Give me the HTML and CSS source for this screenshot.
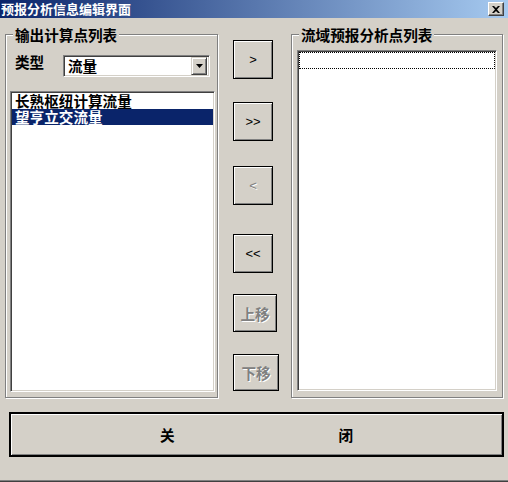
FILE: index.html
```html
<!DOCTYPE html>
<html lang="zh-CN">
<head>
  <meta charset="UTF-8" />
  <title>预报分析信息编辑界面</title>
  <link rel="stylesheet" href="styles.css">
</head>
<body>
  <div class="window">
    <div class="titlebar">
      <span class="title">预报分析信息编辑界面</span>
      <button class="close">
        <svg width="8" height="7" viewBox="0 0 8 7"><path d="M0 0h2l2 2 2-2h2L5 3.5 8 7H6L4 5 2 7H0l3-3.5z" fill="#000"/></svg>
      </button>
    </div>
    <div class="panes">
      <div class="group group-left">
        <span class="caption">输出计算点列表</span>
        <div class="type-row">
          <span class="type-label">类型</span>
          <div class="combo">
            <span class="combo-value">流量</span>
            <span class="combo-arrow">
              <svg width="7" height="4" viewBox="0 0 7 4"><path d="M0 0h7L3.5 4z" fill="#000"/></svg>
            </span>
          </div>
        </div>
        <ul class="listbox list-left">
          <li>长熟枢纽计算流量</li>
          <li class="selected">望亨立交流量</li>
        </ul>
      </div>
      <div class="actions">
        <button class="btn btn-add">&gt;</button>
        <button class="btn btn-add-all">&gt;&gt;</button>
        <button class="btn btn-remove" disabled>&lt;</button>
        <button class="btn btn-remove-all">&lt;&lt;</button>
        <button class="btn btn-up cn" disabled>上移</button>
        <button class="btn btn-down cn" disabled>下移</button>
      </div>
      <div class="group group-right">
        <span class="caption">流域预报分析点列表</span>
        <ul class="listbox list-right">
          <li class="focus"></li>
        </ul>
      </div>
    </div>
    <button class="close-btn"><span>关</span><span>闭</span></button>
  </div>
</body>
</html>
```

FILE: styles.css
```css
* { margin: 0; padding: 0; box-sizing: border-box; }
body {
  width: 508px;
  height: 482px;
  overflow: hidden;
  background: #d4d0c8;
  font-family: "Noto Sans CJK SC", sans-serif;
  color: #000;
}
.window {
  height: 482px;
  border-bottom: 1px solid #404040;
  box-shadow: inset 0 -1px #808080;
}
.titlebar {
  height: 18px;
  display: flex;
  align-items: center;
  justify-content: space-between;
  padding: 0 4px 0 1px;
  background: linear-gradient(to right, #0a246a, #a6caf0);
}
.title {
  color: #fff;
  font-weight: bold;
  font-size: 13px;
  line-height: 18px;
}
.close {
  width: 16px;
  height: 14px;
  display: flex;
  align-items: center;
  justify-content: center;
  background: #d4d0c8;
  border: 1px solid;
  border-color: #fff #404040 #404040 #fff;
  box-shadow: inset -1px -1px #808080;
}
.panes {
  display: flex;
  padding: 16px 0 0 5px;
}
.group {
  position: relative;
  height: 364px;
  border: 1px solid #808080;
  box-shadow: inset 1px 1px #fff, 1px 1px #fff;
}
.group-left { width: 213px; }
.group-right { width: 212px; }
.caption {
  position: absolute;
  top: -9px;
  left: 7px;
  padding: 0 2px;
  background: #d4d0c8;
  font-weight: bold;
  font-size: 14.6px;
  line-height: 18px;
  white-space: nowrap;
}
.type-row {
  display: flex;
  align-items: center;
  height: 22px;
  margin: 20px 0 0 9px;
}
.type-label {
  width: 48px;
  align-self: flex-start;
  margin-top: -2px;
  font-weight: bold;
  font-size: 14.6px;
  line-height: 18px;
}
.combo {
  width: 147px;
  height: 22px;
  display: flex;
  align-items: center;
  justify-content: space-between;
  padding: 0 2px 0 4px;
  background: #fff;
  border: 1px solid;
  border-color: #808080 #fff #fff #808080;
  box-shadow: inset 1px 1px #404040, inset -1px -1px #d4d0c8;
}
.combo-value {
  font-weight: bold;
  font-size: 14.6px;
  line-height: 18px;
}
.combo-arrow {
  width: 16px;
  height: 18px;
  display: flex;
  align-items: center;
  justify-content: center;
  background: #d4d0c8;
  border: 1px solid;
  border-color: #d4d0c8 #404040 #404040 #d4d0c8;
  box-shadow: inset 1px 1px #fff, inset -1px -1px #808080;
}
.listbox {
  list-style: none;
  background: #fff;
  border: 1px solid;
  border-color: #808080 #fff #fff #808080;
  box-shadow: inset 1px 1px #404040, inset -1px -1px #d4d0c8;
  padding: 1px 1px;
}
.listbox li {
  font-weight: bold;
  font-size: 14.6px;
  line-height: 16px;
  height: 16px;
  padding-left: 3px;
  white-space: nowrap;
}
.list-left {
  width: 205px;
  height: 301px;
  margin: 14px 0 0 4px;
}
.list-left .selected {
  background: #0a246a;
  color: #fff;
}
.list-right {
  width: 200px;
  height: 341px;
  margin: 15px 0 0 5px;
}
.list-right .focus {
  height: 17px;
  border: 1px dotted #000;
}
.actions {
  width: 73px;
  display: flex;
  flex-direction: column;
  align-items: flex-start;
  padding-left: 15px;
}
.btn {
  width: 40px;
  height: 39px;
  background: #d4d0c8;
  border: 1px solid #000;
  box-shadow: inset 1px 1px #fff, inset -1px -1px #808080;
  font-family: "Liberation Sans", sans-serif;
  font-size: 13px;
  color: #000;
}
.btn:disabled {
  color: #808080;
  text-shadow: 1px 1px #fff;
}
.btn.cn {
  font-family: "Noto Sans CJK SC", sans-serif;
  font-weight: bold;
  font-size: 14.6px;
}
.btn-add { margin-top: 6px; }
.btn-add-all { margin-top: 23px; }
.btn-remove { margin-top: 25px; }
.btn-remove-all { margin-top: 29px; }
.btn-up { margin-top: 21px; width: 44px; height: 38px; }
.btn-down { margin-top: 22px; width: 46px; height: 37px; }
.close-btn {
  display: flex;
  align-items: center;
  justify-content: center;
  gap: 164px;
  width: 495px;
  height: 45px;
  margin: 14px 0 0 9px;
  background: #d4d0c8;
  border: 2px solid #000;
  box-shadow: inset 1px 1px #fff, inset -1px -1px #808080;
  font-family: "Noto Sans CJK SC", sans-serif;
  font-weight: bold;
  font-size: 14.6px;
  color: #000;
}
```
